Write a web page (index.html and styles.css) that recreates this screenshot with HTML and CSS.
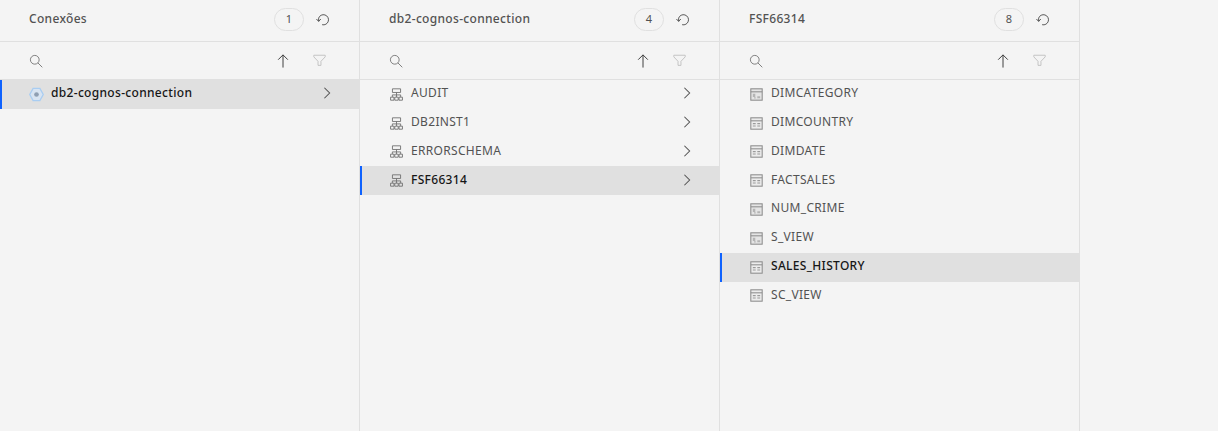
FILE: index.html
```html
<!DOCTYPE html>
<html>
<head>
<meta charset="utf-8">
<title>Conexões</title>
<link rel="stylesheet" href="styles.css">
</head>
<body>

<svg class="defs" width="0" height="0">
	<symbol id="i-refresh" viewBox="0 0 16 16">
		<path d="M7 14.500A5.800 5.800 0 1 0 3 7v3.500" fill="none" stroke="currentColor" stroke-width="1.100"/>
		<path d="M.5 8L3 10.800 5.500 8" fill="none" stroke="currentColor" stroke-width="1.100"/>
	</symbol>
	<symbol id="i-search" viewBox="0 0 16 16">
		<circle cx="6.600" cy="6.600" r="5" fill="none" stroke="currentColor"/>
		<path d="M10.200 10.200L15.200 15.200" fill="none" stroke="currentColor"/>
	</symbol>
	<symbol id="i-up" viewBox="0 0 16 16">
		<path d="M8 15.500V1M2.500 6.500L8 1l5.500 5.500" fill="none" stroke="currentColor" stroke-width="1.100"/>
	</symbol>
	<symbol id="i-filter" viewBox="0 0 16 16">
		<path d="M1 1.500h14v2L9.800 9v5H6.200V9L1 3.500z" fill="none" stroke="currentColor" stroke-width="1.200"/>
	</symbol>
	<symbol id="i-chevron" viewBox="0 0 16 16">
		<path d="M5 2l6 6-6 6" fill="none" stroke="currentColor" stroke-width="1.200"/>
	</symbol>
	<symbol id="i-conn" viewBox="0 0 16 16">
		<path d="M4.400 1.500h7.200L15.200 8l-3.600 6.500H4.400L.8 8z" fill="#d8e4f2" stroke="#a9cdf2" stroke-width="1.400"/>
		<circle cx="8" cy="8" r="2.500" fill="#8f9fb3"/>
	</symbol>
	<symbol id="i-schema" viewBox="0 0 16 16">
		<path d="M3 1h10v4.500H3zM8 5.500v3M2.900 11V8.500h10.200V11M8 8.500V11M.7 11.300h4.200v3.700H.7zM5.900 11.300h4.200v3.700H5.900zM11.100 11.300h4.200v3.700h-4.200z" fill="none" stroke="currentColor" stroke-width="1.100"/>
	</symbol>
	<symbol id="i-table-a" viewBox="0 0 16 16">
		<rect x="1" y="1" width="14" height="14" fill="#e4e4e4" stroke="#8d8d8d" stroke-width="1.300"/>
		<path d="M1 4.700h14" fill="none" stroke="#8d8d8d" stroke-width="1.300"/>
		<path d="M3.500 7h3v4h-3zM9 10h3.500v2.500H9zM5 11.500h2v1.500H5z" fill="#b4b4b4"/>
	</symbol>
	<symbol id="i-table-b" viewBox="0 0 16 16">
		<rect x="1" y="1" width="14" height="14" fill="#ececec" stroke="#8d8d8d" stroke-width="1.300"/>
		<path d="M1 4.700h14" fill="none" stroke="#8d8d8d" stroke-width="1.300"/>
		<path d="M3.500 7.500h3.500v1.300H3.500zM9 7.500h3.500v1.300H9zM3.500 10.500h3.500v1.300H3.500zM9 10.500h3.500v1.300H9z" fill="#9a9a9a"/>
	</symbol>
</svg>

<div class="columns">

	<section class="column">
		<header class="column-head">
			<h2 class="column-title">Conexões</h2>
			<span class="count">1</span>
			<svg class="icon refresh"><use href="#i-refresh"/></svg>
		</header>
		<div class="toolbar">
			<svg class="icon search"><use href="#i-search"/></svg>
			<svg class="icon sort"><use href="#i-up"/></svg>
			<svg class="icon filter"><use href="#i-filter"/></svg>
		</div>
		<ul class="list">
			<li class="row selected">
				<svg class="icon kind conn"><use href="#i-conn"/></svg>
				<span class="label">db2-cognos-connection</span>
				<svg class="icon chevron"><use href="#i-chevron"/></svg>
			</li>
		</ul>
	</section>

	<section class="column">
		<header class="column-head">
			<h2 class="column-title">db2-cognos-connection</h2>
			<span class="count">4</span>
			<svg class="icon refresh"><use href="#i-refresh"/></svg>
		</header>
		<div class="toolbar">
			<svg class="icon search"><use href="#i-search"/></svg>
			<svg class="icon sort"><use href="#i-up"/></svg>
			<svg class="icon filter"><use href="#i-filter"/></svg>
		</div>
		<ul class="list">
			<li class="row">
				<svg class="icon kind"><use href="#i-schema"/></svg>
				<span class="label">AUDIT</span>
				<svg class="icon chevron"><use href="#i-chevron"/></svg>
			</li>
			<li class="row">
				<svg class="icon kind"><use href="#i-schema"/></svg>
				<span class="label">DB2INST1</span>
				<svg class="icon chevron"><use href="#i-chevron"/></svg>
			</li>
			<li class="row">
				<svg class="icon kind"><use href="#i-schema"/></svg>
				<span class="label">ERRORSCHEMA</span>
				<svg class="icon chevron"><use href="#i-chevron"/></svg>
			</li>
			<li class="row selected">
				<svg class="icon kind"><use href="#i-schema"/></svg>
				<span class="label">FSF66314</span>
				<svg class="icon chevron"><use href="#i-chevron"/></svg>
			</li>
		</ul>
	</section>

	<section class="column">
		<header class="column-head">
			<h2 class="column-title">FSF66314</h2>
			<span class="count">8</span>
			<svg class="icon refresh"><use href="#i-refresh"/></svg>
		</header>
		<div class="toolbar">
			<svg class="icon search"><use href="#i-search"/></svg>
			<svg class="icon sort"><use href="#i-up"/></svg>
			<svg class="icon filter"><use href="#i-filter"/></svg>
		</div>
		<ul class="list">
			<li class="row">
				<svg class="icon kind"><use href="#i-table-a"/></svg>
				<span class="label">DIMCATEGORY</span>
			</li>
			<li class="row">
				<svg class="icon kind"><use href="#i-table-b"/></svg>
				<span class="label">DIMCOUNTRY</span>
			</li>
			<li class="row">
				<svg class="icon kind"><use href="#i-table-b"/></svg>
				<span class="label">DIMDATE</span>
			</li>
			<li class="row">
				<svg class="icon kind"><use href="#i-table-b"/></svg>
				<span class="label">FACTSALES</span>
			</li>
			<li class="row">
				<svg class="icon kind"><use href="#i-table-a"/></svg>
				<span class="label">NUM_CRIME</span>
			</li>
			<li class="row">
				<svg class="icon kind"><use href="#i-table-a"/></svg>
				<span class="label">S_VIEW</span>
			</li>
			<li class="row selected">
				<svg class="icon kind"><use href="#i-table-b"/></svg>
				<span class="label">SALES_HISTORY</span>
			</li>
			<li class="row">
				<svg class="icon kind"><use href="#i-table-b"/></svg>
				<span class="label">SC_VIEW</span>
			</li>
		</ul>
	</section>

</div>

</body>
</html>
```

FILE: styles.css
```css
html, body {
	height: 100%;
}

body {
	margin: 0;
	background-color: #f4f4f4;
	color: #525252;
	font-family: "Noto Sans", "Liberation Sans", sans-serif;
	font-size: 12px;
	letter-spacing: 0.32px;
	overflow: hidden;
}

.defs {
	position: absolute;
}

.columns {
	display: flex;
	height: 100%;
}

.column {
	width: 360px;
	border-right: 1px solid #e0e0e0;
	box-sizing: border-box;
}

.column-head {
	display: flex;
	align-items: center;
	height: 42px;
	padding: 0 29px 3px 29px;
	border-bottom: 1px solid #e0e0e0;
	box-sizing: border-box;
}

.column-title {
	flex: 1;
	margin: 0 0 2px;
	font-size: 12px;
	font-weight: 500;
	color: #525252;
}

.count {
	width: 30px;
	height: 23px;
	line-height: 20px;
	margin-right: 12px;
	border: 1px solid #e0e0e0;
	border-radius: 12px;
	box-sizing: border-box;
	text-align: center;
	font-size: 11px;
	letter-spacing: 0;
}

.icon {
	display: block;
	flex: none;
	width: 16px;
	height: 16px;
}

.refresh {
	width: 14px;
	height: 14px;
	color: #525252;
}

.toolbar {
	display: flex;
	align-items: center;
	height: 38px;
	padding: 0 33px 0 29px;
	border-bottom: 1px solid #e0e0e0;
	box-sizing: border-box;
}

.search {
	width: 14px;
	height: 14px;
	color: #6f6f6f;
	margin-right: auto;
}

.sort {
	width: 14px;
	height: 14px;
	color: #393939;
	margin-right: 23px;
}

.filter {
	width: 13px;
	height: 13px;
	color: #c2c2c2;
}

.list {
	list-style: none;
	margin: 0;
	padding: 0;
}

.row {
	display: flex;
	align-items: center;
	height: 28.8px;
	padding: 0 25px 0 29px;
	box-sizing: border-box;
}

.row.selected {
	background-color: #e0e0e0;
	box-shadow: inset 2px 0 0 #0f62fe;
	color: #161616;
}

.row.selected .label {
	font-weight: 500;
}

.kind {
	width: 13px;
	height: 13px;
	margin-left: 1px;
	margin-right: 8px;
	color: #6f6f6f;
}

.kind.conn {
	width: 15px;
	height: 15px;
	margin-left: 0;
	margin-right: 7px;
}

.label {
	flex: 1;
	padding-bottom: 3.5px;
}

.chevron {
	width: 14px;
	height: 14px;
	margin-bottom: 2px;
	color: #525252;
}
```
